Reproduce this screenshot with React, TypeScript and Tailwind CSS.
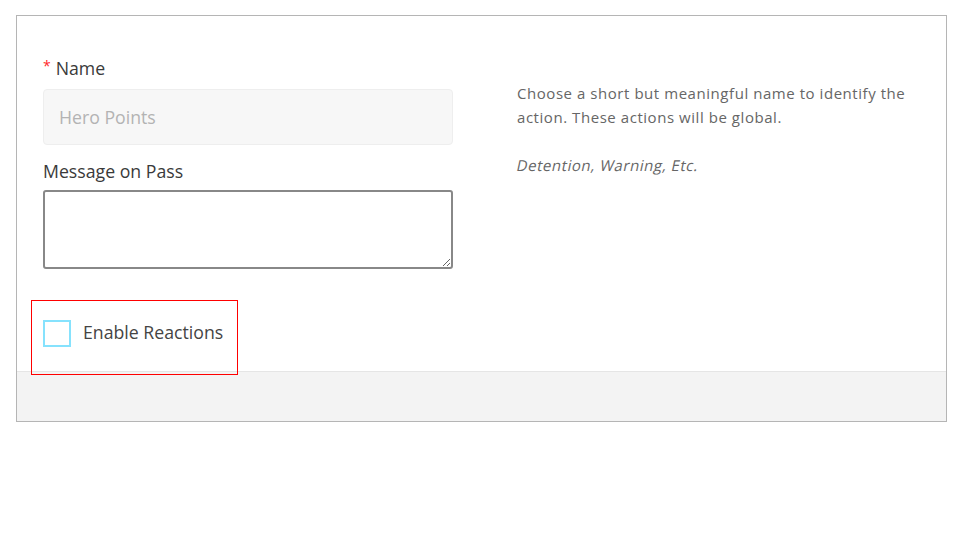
import { useState } from 'react'

export default function App() {
  const [name, setName] = useState('')
  const [message, setMessage] = useState('')
  const [reactions, setReactions] = useState(false)

  return (
    <div className="w-[960px] h-[540px] bg-white pt-[15px] pl-[16px]" style={{ fontFamily: '"Open Sans", "Liberation Sans", sans-serif' }}>
      <div className="w-[931px] h-[407px] border border-[#b5b5b5] flex flex-col">
        {/* form body */}
        <div className="flex-1 flex pl-[26px] pt-[41px]">
          <div className="w-[410px]">
            <label className="flex items-center text-[17.7px] leading-[22px] font-medium text-[#3a3a3a]">
              <span className="text-[#ff2a2a] text-[14px] mr-[5px] -mt-[4px]">*</span>
              Name
            </label>
            <input
              type="text"
              value={name}
              onChange={e => setName(e.target.value)}
              placeholder="Hero Points"
              className="mt-[10px] w-full h-[56px] bg-[#f7f7f7] border border-[#eeeeee] rounded-[4px] px-[15px] text-[17.7px] text-[#333] placeholder:text-[#b3b3b3] focus:outline-none"
            />
            <label className="block mt-[15px] text-[17.7px] leading-[22px] font-medium text-[#3a3a3a]">Message on Pass</label>
            <textarea
              value={message}
              onChange={e => setMessage(e.target.value)}
              className="block mt-[8px] w-full h-[79px] border-2 border-[#888] rounded-[3px] px-2 py-1 text-[16px] focus:outline-none"
            />
            <div className="relative mt-[51px] flex items-center gap-[12px] h-[27px]">
              <div className="absolute -left-[12px] -top-[20px] w-[207px] h-[75px] border border-[#ff0000] pointer-events-none" />
              <button
                onClick={() => setReactions(!reactions)}
                className={"w-[28px] h-[27px] border-2 border-[#86e2fd] " + (reactions ? 'bg-[#86e2fd]' : 'bg-white')}
              />
              <span className="text-[17.7px] text-[#444] -mt-[2px]">Enable Reactions</span>
            </div>
          </div>
          <div className="ml-[64px] pt-[24px] w-[400px] text-[15px] leading-[24px] tracking-[0.55px] text-[#666]">
            <p>Choose a short but meaningful name to identify the action. These actions will be global.</p>
            <p className="mt-[24px]">
              <span className="inline-block -skew-x-12">Detention, Warning, Etc.</span>
            </p>
          </div>
        </div>
        {/* footer */}
        <div className="h-[50px] bg-[#f3f3f3] border-t border-[#e5e5e5]" />
      </div>
    </div>
  )
}
